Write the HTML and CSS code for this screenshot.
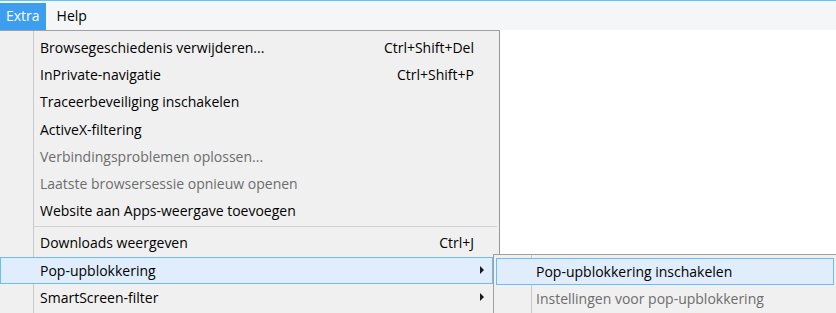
FILE: index.html
```html
<!DOCTYPE html>
<html lang="nl">
<head>
<meta charset="utf-8">
<title>Extra menu</title>
<link rel="stylesheet" href="styles.css">
</head>
<body>
<div class="topline"></div>
<nav class="menubar">
  <span class="mb-item active">Extra</span>
  <span class="mb-item">Help</span>
</nav>
<div class="menu">
  <div class="item"><span class="label">Browsegeschiedenis verwijderen...</span><span class="shortcut">Ctrl+Shift+Del</span></div>
  <div class="item"><span class="label">InPrivate-navigatie</span><span class="shortcut">Ctrl+Shift+P</span></div>
  <div class="item"><span class="label">Traceerbeveiliging inschakelen</span></div>
  <div class="item"><span class="label">ActiveX-filtering</span></div>
  <div class="item disabled"><span class="label">Verbindingsproblemen oplossen...</span></div>
  <div class="item disabled"><span class="label">Laatste browsersessie opnieuw openen</span></div>
  <div class="item"><span class="label">Website aan Apps-weergave toevoegen</span></div>
  <div class="sep"></div>
  <div class="item"><span class="label">Downloads weergeven</span><span class="shortcut">Ctrl+J</span></div>
  <div class="item hl"><span class="label">Pop-upblokkering</span><span class="arrow"></span></div>
  <div class="item"><span class="label">SmartScreen-filter</span><span class="arrow"></span></div>
</div>
<div class="submenu">
  <div class="item hl"><span class="label">Pop-upblokkering inschakelen</span></div>
  <div class="item disabled"><span class="label">Instellingen voor pop-upblokkering</span></div>
</div>
</body>
</html>
```
FILE: styles.css
```css
html, body {
  margin: 0;
  padding: 0;
  background: #ffffff;
  overflow: hidden;
  font-family: "Open Sans", "Noto Sans", sans-serif;
  font-size: 14px;
  color: #000;
}

.topline {
  height: 1px;
  background: #5ec4f2;
}

.menubar {
  height: 29px;
  background: #f5f6f7;
  display: flex;
  align-items: flex-end;
}

.mb-item {
  height: 27px;
  line-height: 26px;
  padding: 0 6px;
  color: #000;
}

.mb-item + .mb-item {
  margin-left: 5px;
}

.mb-item.active {
  background: #3d9ef0;
  color: #ffffff;
}

.menu {
  width: 493px;
  padding: 3px 6px 8px 0;
  border-top: 1px solid #a0a0a0;
  border-right: 1px solid #979797;
  background:
    linear-gradient(to right, transparent 33px, #c9c9c9 33px, #c9c9c9 34px, transparent 34px),
    #f0f0f0;
}

.item {
  box-sizing: border-box;
  height: 27.2px;
  line-height: 27.2px;
  display: flex;
  align-items: center;
  padding-left: 39px;
  white-space: nowrap;
  border: 1px solid transparent;
}

.item .label {
  flex: 1;
}

.item.disabled {
  color: #6d6d6d;
}

.item.hl {
  background: #dfedfc;
  border-color: #6abef2;
}

.shortcut {
  margin-right: 18px;
}

.arrow {
  width: 0;
  height: 0;
  border-left: 4px solid #1a1a1a;
  border-top: 4px solid transparent;
  border-bottom: 4px solid transparent;
  margin-right: 8px;
}

.sep {
  height: 5px;
  margin-left: 33px;
  margin-right: -4px;
  background: linear-gradient(to bottom, transparent 2px, #d2d2d2 2px, #d2d2d2 3px, transparent 3px);
}

.submenu {
  position: absolute;
  left: 493px;
  top: 254px;
  width: 338px;
  padding: 3px 2px 10px 2px;
  border: 1px solid #a0a0a0;
  border-right: none;
  background:
    linear-gradient(to right, transparent 37px, #c9c9c9 37px, #c9c9c9 38px, transparent 38px),
    #f0f0f0;
}

.submenu .item {
  padding-left: 39px;
}
```
